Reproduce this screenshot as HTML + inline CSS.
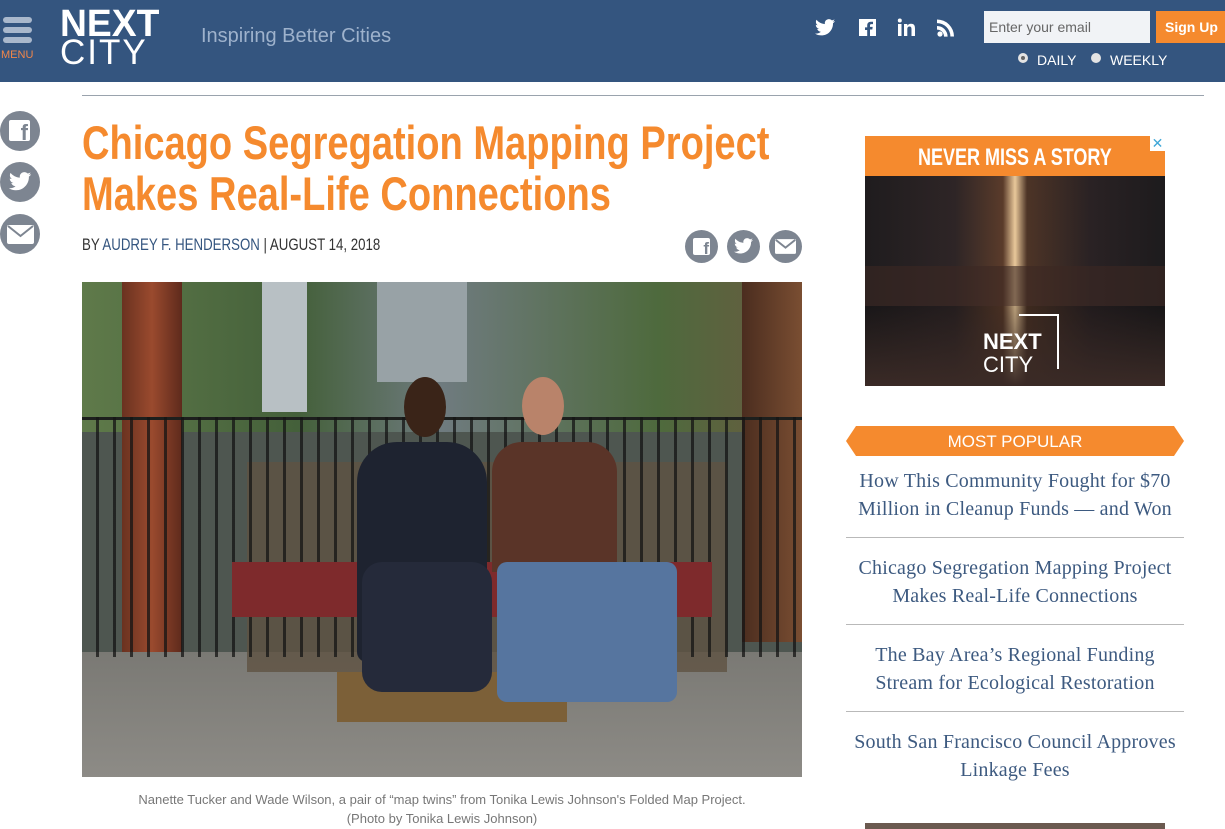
<!DOCTYPE html>
<html><head><meta charset="utf-8"><style>
*{margin:0;padding:0;box-sizing:border-box}
body{width:1225px;height:829px;overflow:hidden;background:#fff;font-family:"Liberation Sans",sans-serif;position:relative}
.hdr{position:absolute;left:0;top:0;width:1225px;height:82px;background:#34557f}
.abs{position:absolute}
.bar{position:absolute;left:3px;width:29px;height:6px;border-radius:3px;background:#a9b8cc}
.sq{transform-origin:0 0;white-space:nowrap}
.circ{position:absolute;width:40px;height:40px;border-radius:50%;background:#7d8591}
.circ2{position:absolute;width:33px;height:33px;border-radius:50%;background:#7d8591}
.pop{position:absolute;left:846px;width:338px;text-align:center;font-family:"Liberation Serif",serif;font-size:20px;line-height:28px;color:#3d5a80;letter-spacing:0.2px}
.hr{position:absolute;left:846px;width:338px;height:1px;background:#b9b9b9}
</style></head><body>
<div class="hdr"></div>
<div class="bar" style="top:17px"></div><div class="bar" style="top:27px"></div><div class="bar" style="top:37px"></div>
<div class="abs" style="left:1px;top:49px;font-size:11px;color:#f0864a">MENU</div>
<div class="abs sq" style="left:60px;top:6px;font-size:38px;font-weight:bold;color:#fff;line-height:36px;transform:scaleX(0.98)">NEXT</div>
<div class="abs" style="left:60px;top:37px;font-size:35px;color:#fff;letter-spacing:2px;line-height:32px">CITY</div>
<div class="abs" style="left:201px;top:25px;font-size:20px;color:#9eb2cc">Inspiring Better Cities</div>
<svg class="abs" style="left:815px;top:17px" width="146" height="22" viewBox="0 0 146 22" fill="#fff">
<path d="M20 4c-.7.3-1.5.5-2.3.6.8-.5 1.5-1.3 1.8-2.2-.8.5-1.7.8-2.6 1-.8-.8-1.8-1.3-3-1.3-2.3 0-4.1 1.8-4.1 4.1 0 .3 0 .6.1.9C6.5 6.9 3.5 5.3 1.5 2.8c-.4.6-.6 1.3-.6 2.1 0 1.4.7 2.7 1.8 3.4-.7 0-1.3-.2-1.9-.5 0 2 1.4 3.7 3.3 4-.6.2-1.2.2-1.9.1.5 1.6 2 2.8 3.8 2.9C4.6 16 2.8 16.6.9 16.6H0c1.8 1.2 4 1.8 6.3 1.8 7.5 0 11.7-6.2 11.700-11.700v-.5c.8-.6 1.5-1.3 2-2.2z"/>
<path d="M44 2h17v17h-6v-6.5h2.3l.4-2.6H55V8.4c0-.8.3-1.3 1.3-1.3H58V4.8c-.3 0-1.2-.1-2.2-.1-2.3 0-3.6 1.4-3.6 3.8v1.9H50v2.6h2.2V19H44z"/>
<rect x="83" y="7" width="3.5" height="12"/><circle cx="84.8" cy="3.5" r="2"/><path d="M89 7h3.3v1.7c.6-1 1.8-2 3.7-2 3.5 0 4 2.3 4 5.2V19h-3.5v-6.2c0-1.5 0-3.3-2-3.3s-2.2 1.5-2.2 3.2V19H89z"/>
<circle cx="125" cy="17" r="2.6"/><path d="M122 9v3.6a7 7 0 017 7h3.6A10.6 10.6 0 00122 9zM122 2.5v3.6a13.4 13.4 0 0113.4 13.4H139A17 17 0 00122 2.5z"/>
</svg>
<div class="abs" style="left:984px;top:11px;width:166px;height:32px;background:#f1f3f6;font-size:14px;color:#666;padding:8px 5px">Enter your email</div>
<div class="abs" style="left:1156px;top:11px;width:69px;height:32px;background:#f58a2e;font-size:14px;font-weight:bold;color:#fff;padding:8px 0 0 9px">Sign Up</div>
<div class="abs" style="left:1018px;top:53px;width:10px;height:10px;border-radius:50%;background:#e4e4e4;border:3px solid #e4e4e4"><div style="width:4px;height:4px;background:#666;border-radius:50%"></div></div>
<div class="abs" style="left:1037px;top:52px;font-size:14px;color:#fff">DAILY</div>
<div class="abs" style="left:1091px;top:53px;width:10px;height:10px;border-radius:50%;background:#e4e4e4"></div>
<div class="abs" style="left:1110px;top:52px;font-size:14px;color:#fff">WEEKLY</div>
<div class="abs" style="left:82px;top:95px;width:1122px;height:1px;background:#9aa3ad"></div>
<div class="circ" style="left:0;top:111px"></div><div class="abs" style="left:9px;top:120px;width:21px;height:21px;background:#fff;border-radius:2px;color:#7d8591;font-weight:bold;font-size:22px;text-align:right;line-height:26px;padding-right:2px">f</div>
<div class="circ" style="left:0;top:162px"></div><svg class="abs" style="left:8px;top:172px" width="24" height="20" viewBox="0 0 20 18" fill="#fff"><path d="M20 2c-.7.3-1.5.5-2.3.6.8-.5 1.5-1.3 1.8-2.2-.8.5-1.7.8-2.6 1-.8-.8-1.8-1.3-3-1.3-2.3 0-4.1 1.8-4.1 4.1 0 .3 0 .6.1.9C6.5 4.9 3.5 3.3 1.5.8c-.4.6-.6 1.3-.6 2.1 0 1.4.7 2.7 1.8 3.4-.7 0-1.3-.2-1.9-.5 0 2 1.4 3.7 3.3 4-.6.2-1.2.2-1.9.1.5 1.6 2 2.8 3.8 2.9C4.6 14 2.8 14.6.9 14.6H0c1.8 1.2 4 1.8 6.3 1.8 7.5 0 11.7-6.2 11.7-11.7v-.5c.8-.6 1.5-1.3 2-2.2z"/></svg>
<div class="circ" style="left:0;top:214px"></div><svg class="abs" style="left:7px;top:225px" width="27" height="19" viewBox="0 0 27 19"><rect x="0" y="0" width="27" height="19" rx="2" fill="#fff"/><path d="M1 1l12.5 10L26 1" stroke="#7d8591" stroke-width="2" fill="none"/></svg>
<div class="abs sq" style="left:82px;top:117px;font-size:47px;font-weight:bold;color:#f58a2e;line-height:51px;transform:scaleX(0.81)">Chicago Segregation Mapping Project<br>Makes Real-Life Connections</div>
<div class="abs sq" style="left:82px;top:235px;font-size:17px;color:#333;transform:scaleX(0.78)">BY <span style="color:#34557f">AUDREY F. HENDERSON</span> | AUGUST 14, 2018</div>
<div class="circ2" style="left:685px;top:230px"></div><div class="abs" style="left:693px;top:238px;width:17px;height:17px;background:#fff;border-radius:2px;color:#7d8591;font-weight:bold;font-size:17px;text-align:right;line-height:21px;padding-right:1px">f</div>
<div class="circ2" style="left:727px;top:230px"></div><svg class="abs" style="left:734px;top:238px" width="19" height="17" viewBox="0 0 20 18" fill="#fff"><path d="M20 2c-.7.3-1.5.5-2.3.6.8-.5 1.5-1.3 1.8-2.2-.8.5-1.7.8-2.6 1-.8-.8-1.8-1.3-3-1.3-2.3 0-4.1 1.8-4.1 4.1 0 .3 0 .6.1.9C6.5 4.9 3.5 3.3 1.5.8c-.4.6-.6 1.3-.6 2.1 0 1.4.7 2.7 1.8 3.4-.7 0-1.3-.2-1.9-.5 0 2 1.4 3.7 3.3 4-.6.2-1.2.2-1.9.1.5 1.6 2 2.8 3.8 2.9C4.6 14 2.8 14.6.9 14.6H0c1.8 1.2 4 1.8 6.3 1.8 7.5 0 11.7-6.2 11.7-11.7v-.5c.8-.6 1.5-1.3 2-2.2z"/></svg>
<div class="circ2" style="left:769px;top:230px"></div><svg class="abs" style="left:775px;top:239px" width="21" height="15" viewBox="0 0 27 19"><rect width="27" height="19" rx="2" fill="#fff"/><path d="M1 1l12.5 10L26 1" stroke="#7d8591" stroke-width="2.5" fill="none"/></svg>
<!-- photo -->
<div class="abs" style="left:82px;top:282px;width:720px;height:495px;background:#4e5650;overflow:hidden">
<div class="abs" style="left:0;top:0;width:720px;height:150px;background:linear-gradient(90deg,#5f7a4a,#44603a 30%,#6f7b7f 50%,#4e6a3d 80%,#6b5a40)"></div>
<div class="abs" style="left:180px;top:0;width:45px;height:130px;background:#b8c0c4"></div>
<div class="abs" style="left:295px;top:0;width:90px;height:100px;background:#98a2a6"></div>
<div class="abs" style="left:40px;top:0;width:60px;height:380px;background:linear-gradient(90deg,#6a3220,#9a4a2e,#5e2a1c)"></div>
<div class="abs" style="left:660px;top:0;width:60px;height:360px;background:linear-gradient(90deg,#4b2d1f,#7a4e32)"></div>
<div class="abs" style="left:0;top:135px;width:720px;height:3px;background:#1d1f1d"></div>
<div class="abs" style="left:0;top:370px;width:720px;height:125px;background:linear-gradient(180deg,#7a7974,#8d8b86)"></div>
<div class="abs" style="left:165px;top:180px;width:480px;height:210px;background:#5f5242;opacity:.8"></div>
<div class="abs" style="left:0;top:135px;width:720px;height:240px;background:repeating-linear-gradient(90deg,transparent 0 14px,rgba(20,20,20,.75) 14px 17px)"></div>
<div class="abs" style="left:150px;top:280px;width:480px;height:55px;background:#7e2a2c"></div>
<div class="abs" style="left:255px;top:390px;width:230px;height:50px;background:#7c6038"></div>
<div class="abs" style="left:275px;top:160px;width:130px;height:220px;background:#1e2330;border-radius:40px 40px 10px 10px"></div>
<div class="abs" style="left:280px;top:280px;width:130px;height:130px;background:#252a3a;border-radius:20px"></div>
<div class="abs" style="left:322px;top:95px;width:42px;height:60px;background:#3a2418;border-radius:50%"></div>
<div class="abs" style="left:410px;top:160px;width:125px;height:130px;background:#5a3428;border-radius:30px 30px 0 0"></div>
<div class="abs" style="left:415px;top:280px;width:180px;height:140px;background:#56759f;border-radius:10px"></div>
<div class="abs" style="left:440px;top:95px;width:42px;height:58px;background:#b9836a;border-radius:50%"></div>
</div>
<div class="abs" style="left:82px;top:790px;width:720px;text-align:center;font-size:13px;line-height:19px;color:#777">Nanette Tucker and Wade Wilson, a pair of “map twins” from Tonika Lewis Johnson's Folded Map Project.<br>(Photo by Tonika Lewis Johnson)</div>
<!-- ad -->
<div class="abs" style="left:865px;top:136px;width:300px;height:250px;background:linear-gradient(90deg,#1f1c1e,#2e2526 30%,#5a3b2a 46%,#e9c89a 50%,#4d3426 54%,#2a2224 75%,#1d1b1d);overflow:hidden">
<div class="abs" style="left:0;top:0;width:300px;height:40px;background:#f58a2e"></div>
<div class="abs sq" style="left:53px;top:8px;color:#fff;font-weight:bold;font-size:24px;line-height:28px;transform:scaleX(0.75)">NEVER MISS A STORY</div>
<div class="abs" style="left:0;top:130px;width:300px;height:40px;background:rgba(60,40,35,.6)"></div>
<div class="abs" style="left:0;top:170px;width:300px;height:80px;background:linear-gradient(180deg,rgba(0,0,0,.2),#3a2a26)"></div>
<div class="abs" style="left:118px;top:195px;font-weight:bold;color:#fff;font-size:22px;line-height:22px">NEXT</div>
<div class="abs" style="left:118px;top:218px;color:#fff;font-size:22px;line-height:22px">CITY</div>
<div class="abs" style="left:154px;top:178px;width:40px;height:55px;border-top:2px solid #fff;border-right:2px solid #fff"></div>
</div>
<div class="abs" style="left:1150px;top:136px;width:15px;height:15px;background:#fff;color:#3fa7d8;font-size:14px;line-height:15px;text-align:center">✕</div>
<svg class="abs" style="left:846px;top:426px" width="338" height="30"><polygon points="10,0 328,0 338,15 328,30 10,30 0,15" fill="#f58a2e"/><text x="169" y="21" text-anchor="middle" fill="#fff" font-family="Liberation Sans" font-size="17">MOST POPULAR</text></svg>
<div class="pop" style="top:467px">How This Community Fought for $70 Million in Cleanup Funds — and Won</div>
<div class="hr" style="top:537px"></div>
<div class="pop" style="top:554px">Chicago Segregation Mapping Project Makes Real-Life Connections</div>
<div class="hr" style="top:624px"></div>
<div class="pop" style="top:641px">The Bay Area’s Regional Funding<br>Stream for Ecological Restoration</div>
<div class="hr" style="top:711px"></div>
<div class="pop" style="top:728px">South San Francisco Council Approves Linkage Fees</div>
<div class="abs" style="left:865px;top:823px;width:300px;height:6px;background:#6b5a50"></div>
</body></html>
